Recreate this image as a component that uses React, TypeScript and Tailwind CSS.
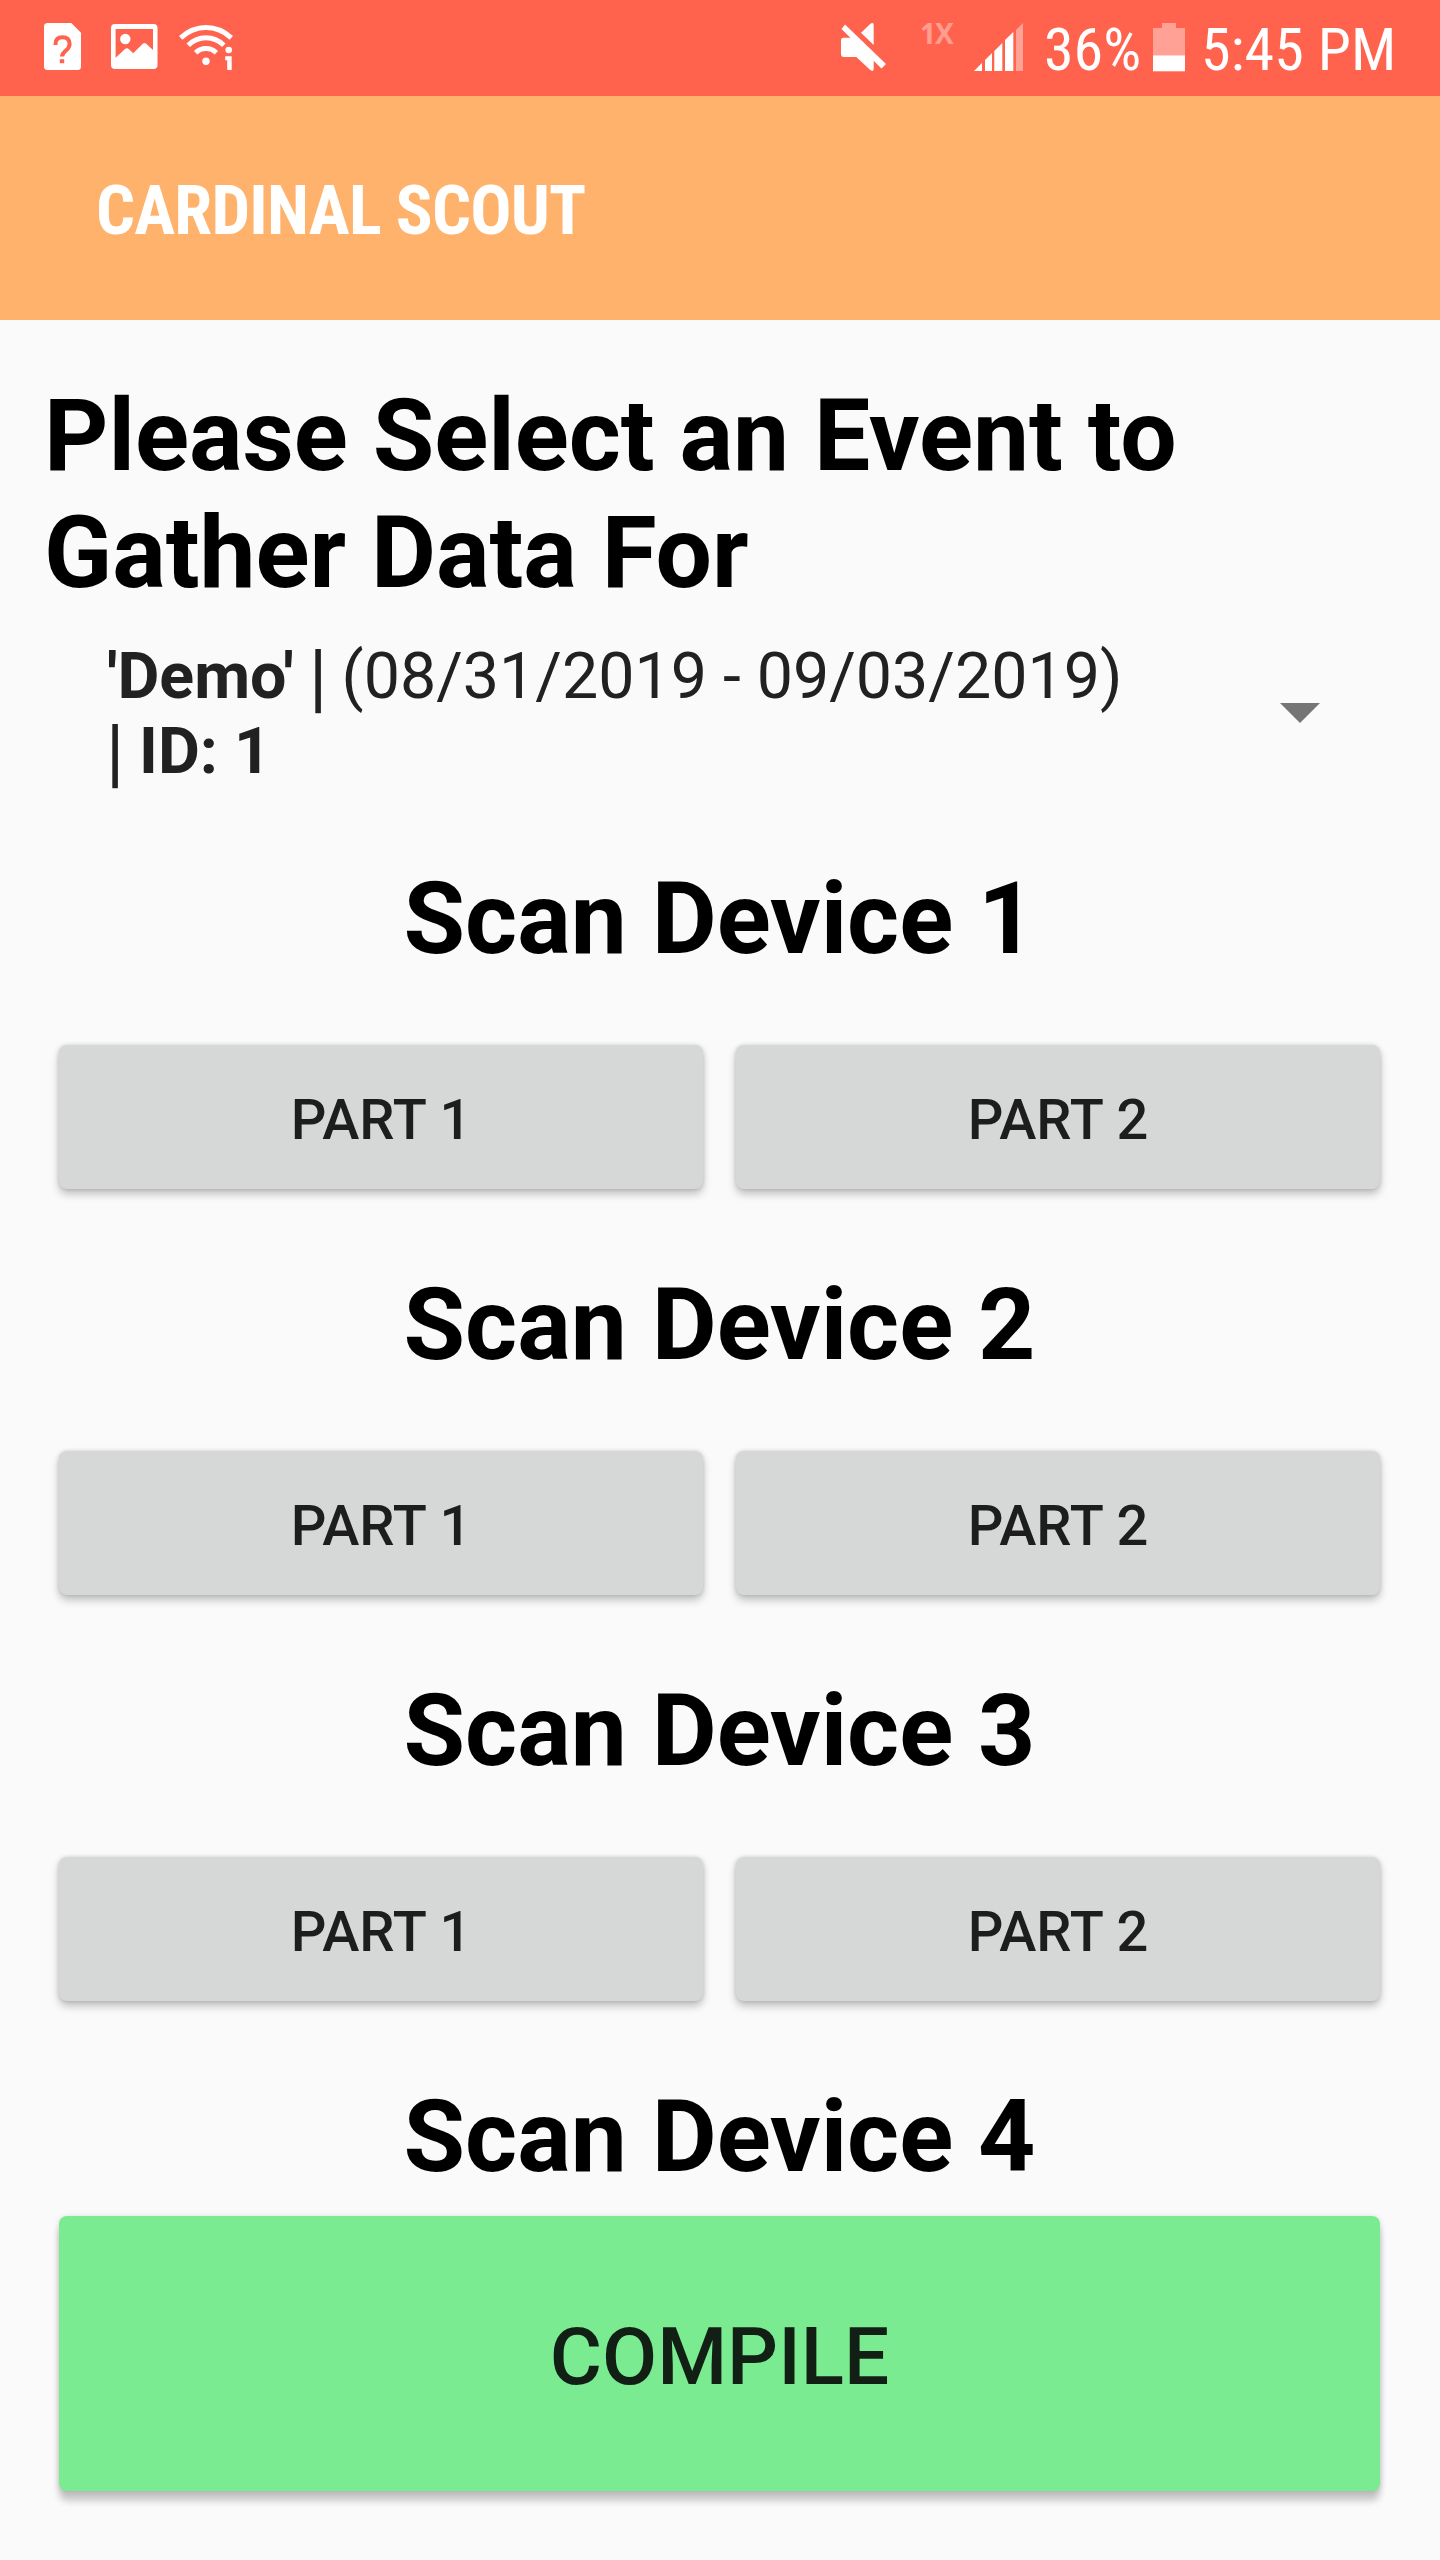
import React from 'react';

function FileQuestionIcon() {
  return (
    <svg width="38" height="48" viewBox="0 0 38 48" className="block shrink-0">
      <path d="M3.5 0H27.3L37 9.7V43.5Q37 47 33.5 47H3.5Q0 47 0 43.5V3.5Q0 0 3.5 0Z" fill="#fff" />
      <path d="M11.5 22V21.2Q11.5 14.2 18.4 14.2Q25.6 14.2 25.6 21Q25.6 24.4 21.9 27.6Q18 30.9 18 33.6" fill="none" stroke="#ff634e" strokeWidth="4" />
      <rect x="15.8" y="36.2" width="4.4" height="4" fill="#ff634e" />
    </svg>
  );
}

function PictureIcon() {
  return (
    <svg width="47" height="46" viewBox="0 0 47 46" className="block shrink-0">
      <path
        fillRule="evenodd"
        fill="#fff"
        d="M4 0H42.500Q46.500 0 46.500 4V41Q46.500 45 42.500 45H4Q0 45 0 41V4Q0 0 4 0ZM4.600 5V33.800L13.800 25.200Q16 23.400 18 25.200L22.200 29.200L31.500 20Q33.500 18.200 35.500 20L42 26V5Z"
      />
      <circle cx="14.300" cy="15" r="5.200" fill="#fff" />
    </svg>
  );
}

function WifiIcon() {
  return (
    <svg width="54" height="46" viewBox="0 0 54 46" className="block shrink-0">
      <g fill="none" stroke="#fff" strokeWidth="5">
        <path d="M1.700 12.800Q13 2.600 27 2.600Q41 2.600 52.300 12.800" />
        <path d="M9.200 20.200Q17 12.800 27 12.800Q37 12.800 44.800 20.200" />
        <path d="M16.700 27.700Q21 23.600 27 23.600Q33 23.600 37.300 27.700" />
      </g>
      <circle cx="27" cy="36.200" r="3.700" fill="#fff" />
      <circle cx="49.700" cy="25" r="3.300" fill="#fff" />
      <path d="M46.200 31.300H52.700V45H48.200V35.300H46.200Z" fill="#fff" />
    </svg>
  );
}

function MuteIcon() {
  return (
    <svg width="46" height="49" viewBox="0 0 46 49" className="block shrink-0">
      <path d="M20 9.700L29 1.200Q32.700 -1.500 32.700 2.500V22Z" fill="#fff" />
      <path d="M2.500 14.700H12L32.700 35.500V45.500Q32.700 49.500 29 46.800L15.300 34H3Q0 34 0 31V17.200Q0 14.700 2.500 14.700Z" fill="#fff" />
      <path d="M4 1.500L45 41L40.500 45.500L0.500 6Z" fill="#fff" />
    </svg>
  );
}

function SignalIcon() {
  return (
    <svg width="50" height="49" viewBox="0 0 50 49" className="block shrink-0">
      <path d="M0 48L8 40V48ZM11 37L18 30V48H11ZM20.300 28L28.300 20V48H20.300ZM31 17L39.300 9V48H31Z" fill="#fff" />
      <path d="M42 7L49 0V48H42Z" fill="#fff" fillOpacity="0.400" />
    </svg>
  );
}

function BatteryIcon() {
  return (
    <svg width="32" height="49" viewBox="0 0 32 49" className="block shrink-0">
      <path d="M0 5H9V0H23V5H32V32.300H0Z" fill="#fff" fillOpacity="0.400" />
      <rect y="32.300" width="32" height="16" fill="#fff" />
    </svg>
  );
}

function StatusBar() {
  return (
    <header className="flex h-24 items-start bg-[#ff634e] pt-[23px] pl-11 text-white">
      <FileQuestionIcon />
      <div className="ml-[29px] pt-px"><PictureIcon /></div>
      <div className="ml-[21px] pt-[2px]"><WifiIcon /></div>
      <div className="ml-[608px]"><MuteIcon /></div>
      <div className="ml-[33px] w-[46px] shrink-0 font-['Open_Sans'] text-[28px] leading-5 font-bold tracking-[-1px] text-white/40">1X</div>
      <div className="ml-[8px]"><SignalIcon /></div>
      <div className="ml-[20px] w-[109px] shrink-0 text-[60px] leading-[54px] whitespace-nowrap [font-stretch:75%]">36%</div>
      <BatteryIcon />
      <div className="ml-[16px] shrink-0 text-[60px] leading-[54px] whitespace-nowrap [font-stretch:75%]">5:45 PM</div>
    </header>
  );
}

function Bar() {
  return <span className="inline-block origin-center translate-y-px scale-x-[1.100] scale-y-[1.170] font-medium">|</span>;
}

function PartButton({ children }: { children: React.ReactNode }) {
  return (
    <button className="h-36 flex-1 rounded-[8px] bg-[#d6d8d7] pt-[5px] text-[56px] font-medium text-[#1d1d1d] shadow-[0_5px_8px_rgba(0,0,0,0.24),0_0_4px_rgba(0,0,0,0.14)]">
      {children}
    </button>
  );
}

function Device({ id, withButtons }: { id: number; withButtons: boolean }) {
  return (
    <section>
      <h2 className="pr-px text-center text-[100px] leading-[117px] font-bold text-black">Scan Device {id}</h2>
      {withButtons && (
        <div className="mt-[68px] mb-[77px] flex gap-[33px] pr-[60px] pl-[59px]">
          <PartButton>PART 1</PartButton>
          <PartButton>PART 2</PartButton>
        </div>
      )}
    </section>
  );
}

export default function App() {
  return (
    <div className="flex h-[2560px] w-[1440px] flex-col overflow-hidden bg-[#fafafa] font-['Roboto',sans-serif]">
      <StatusBar />
      <div className="flex h-56 items-center bg-[#ffb26b] pt-[5px] pl-24">
        <h1 className="text-[68.500px] leading-[80px] font-bold tracking-[-0.800px] text-white [font-stretch:75%]">CARDINAL SCOUT</h1>
      </div>
      <main className="flex flex-1 flex-col pt-[57px]">
        <h2 className="pl-[44px] text-[100px] leading-[117px] font-bold text-black">
          Please Select an Event to<br />Gather Data For
        </h2>
        <div className="mt-7 flex h-[150px] justify-between pr-[120px] pl-[107px] text-[#212121]">
          <p className="text-[64.500px] leading-[75px]">
            <b>'Demo'</b> <Bar /> (08/31/2019 - 09/03/2019)<br /><Bar /> <b>ID: 1</b>
          </p>
          <svg width="40" height="20" viewBox="0 0 40 20" className="mt-16 block"><path d="M0 0H40L20 20Z" fill="#757575" /></svg>
        </div>
        <div className="mt-[71px] h-[1356px]">
          {[1, 2, 3, 4].map((id) => <Device key={id} id={id} withButtons={id < 4} />)}
        </div>
        <button className="mr-[60px] ml-[59px] h-[275px] shrink-0 rounded-[8px] bg-[#7aeb91] pt-[7px] text-[80px] font-medium text-[#111f15] shadow-[0_10px_7px_rgba(0,0,0,0.2),0_1px_6px_rgba(0,0,0,0.14)]">COMPILE</button>
      </main>
    </div>
  );
}
